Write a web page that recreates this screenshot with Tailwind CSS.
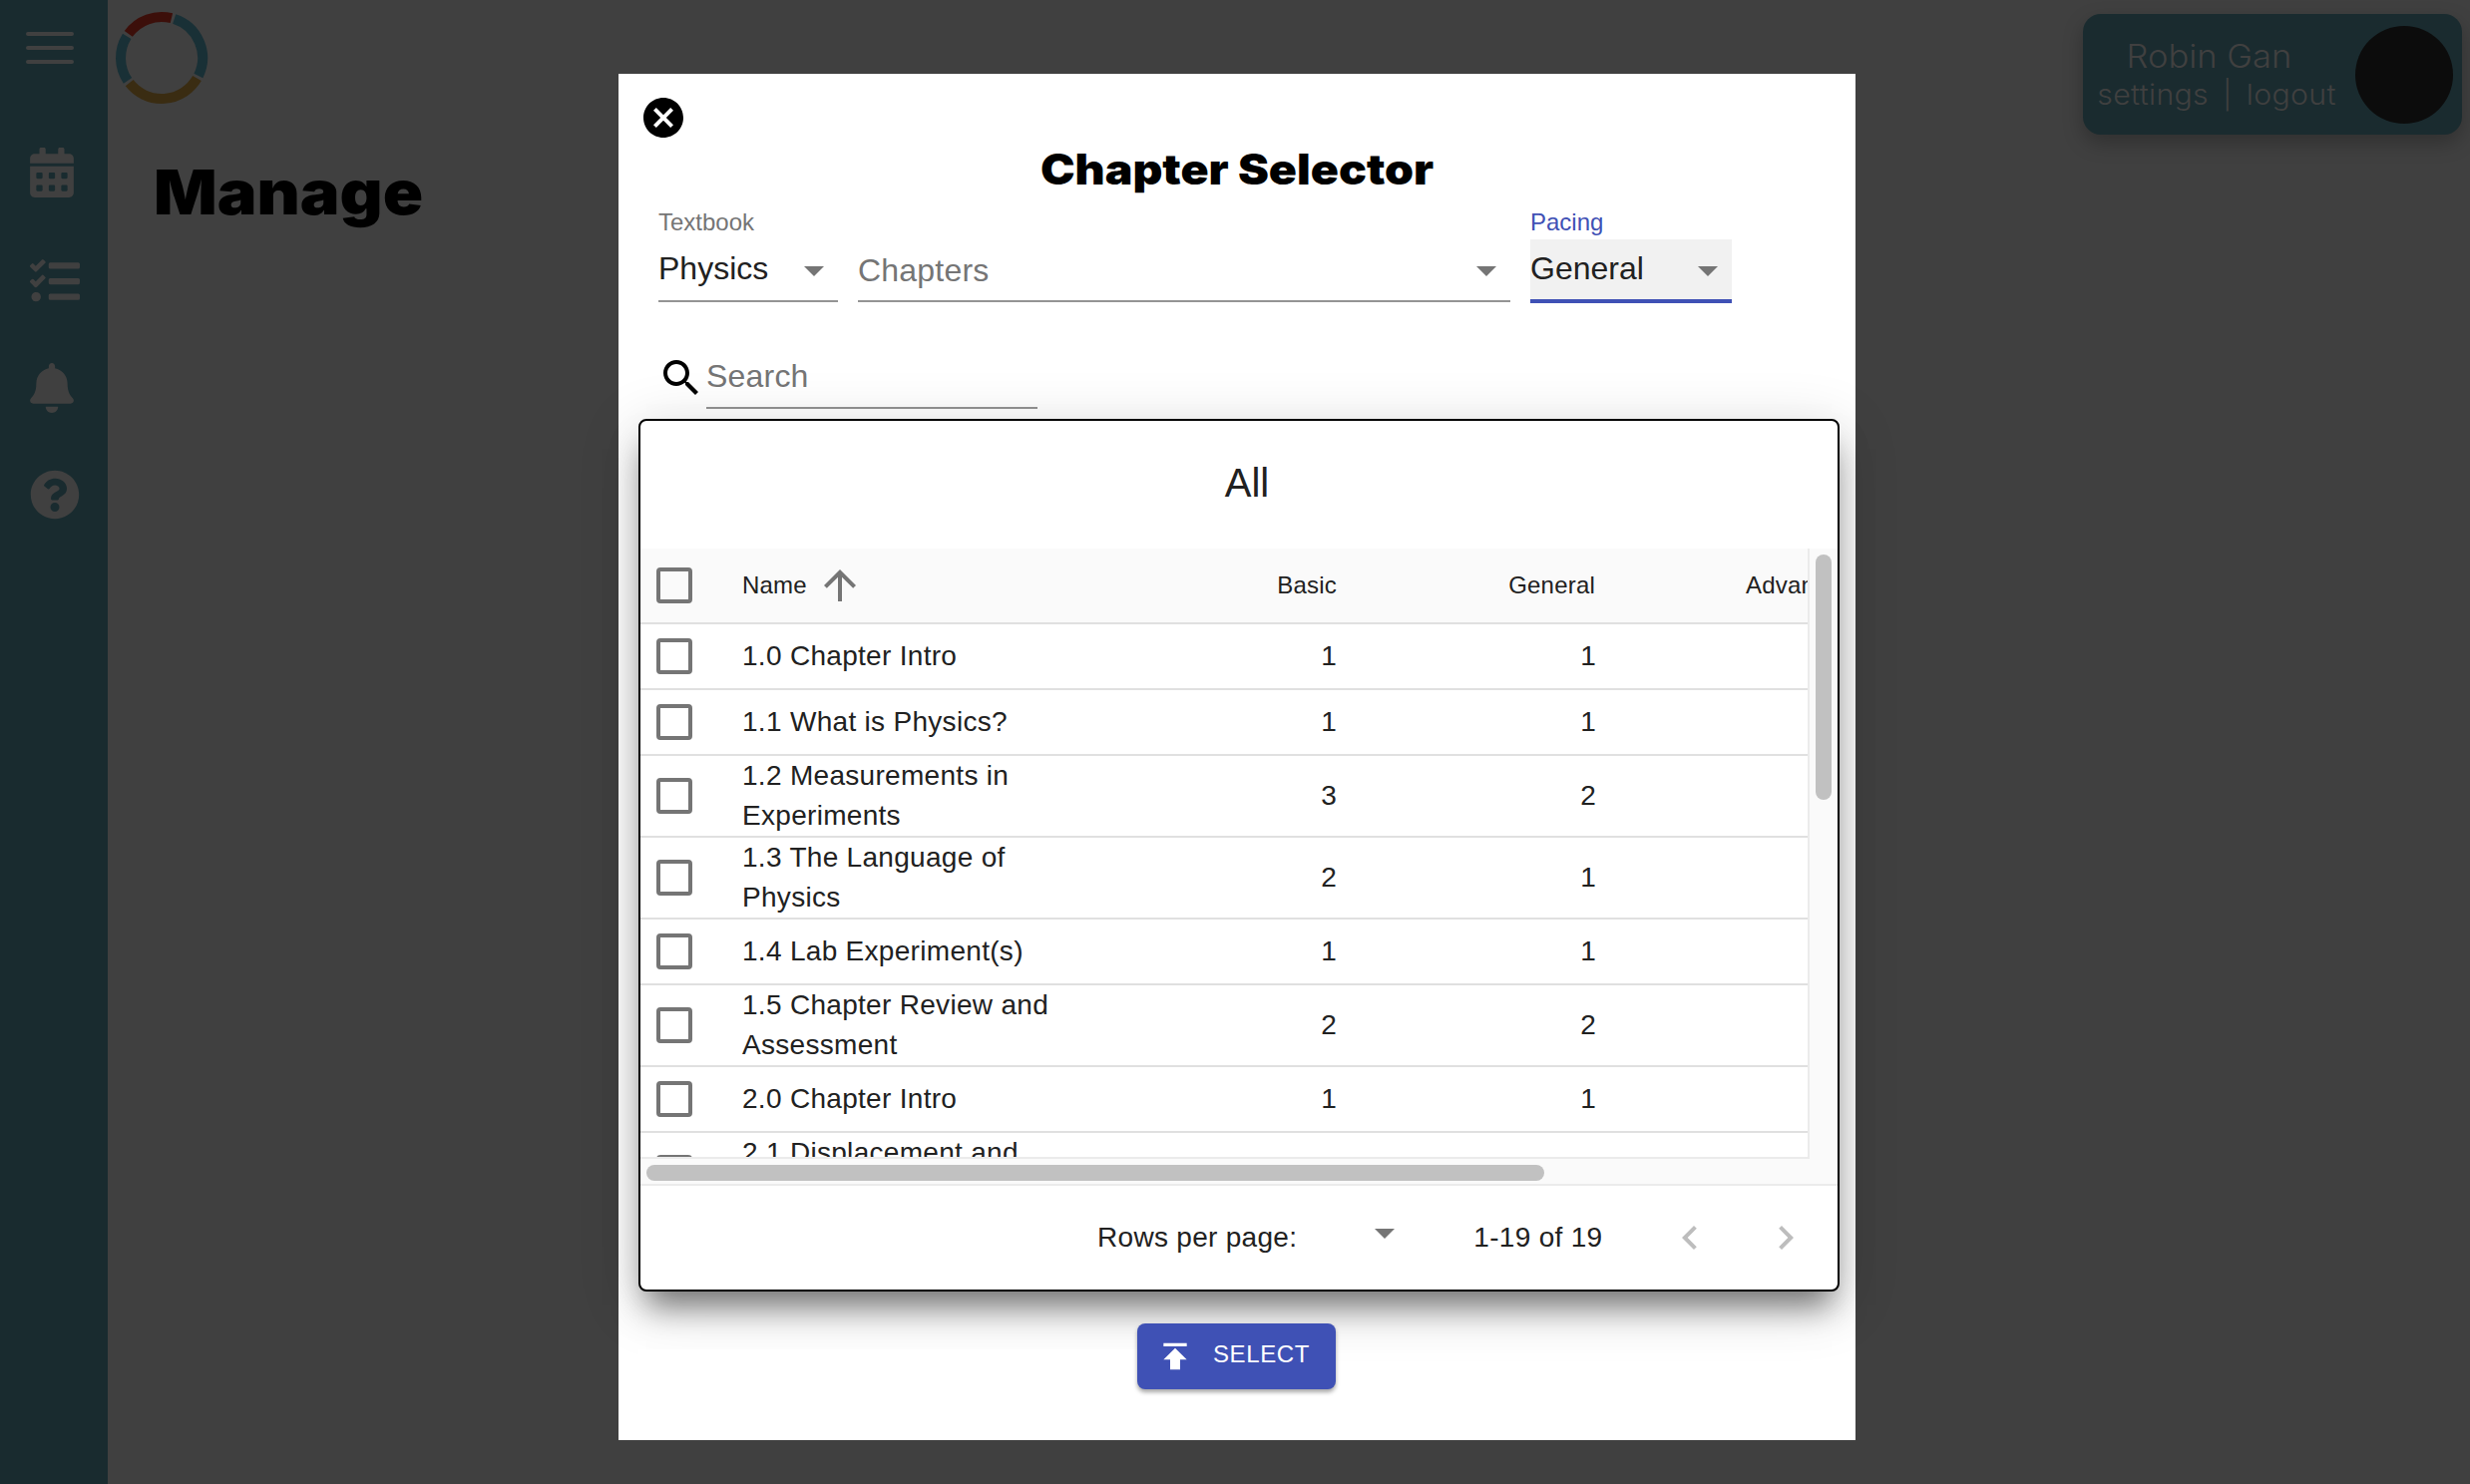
<!DOCTYPE html>
<html>
<head>
<meta charset="utf-8">
<script src="https://cdn.jsdelivr.net/npm/@tailwindcss/browser@4"></script>
<title>Manage</title>
</head>
<body class="font-['Liberation_Sans',Arial,sans-serif]">
<div class="relative flex h-[1488px] w-[2476px] overflow-hidden bg-[#404040]">
  <!-- Sidebar -->
  <aside class="flex h-full w-[108px] shrink-0 flex-col bg-[#192b2f] pl-[26px] text-[#404040]">
    <div class="mt-[32px] flex w-[48px] flex-col gap-[10px]">
      <div class="h-[4px] rounded-full bg-[#404040]"></div>
      <div class="h-[4px] rounded-full bg-[#404040]"></div>
      <div class="h-[4px] rounded-full bg-[#404040]"></div>
    </div>
    <svg class="ml-[4px] mt-[84px] h-[50px] w-[44px] shrink-0" viewBox="0 0 448 512" fill="currentColor"><path d="M0 464c0 26.5 21.5 48 48 48h352c26.5 0 48-21.5 48-48V192H0v272zm320-196c0-6.6 5.4-12 12-12h40c6.6 0 12 5.4 12 12v40c0 6.6-5.4 12-12 12h-40c-6.6 0-12-5.4-12-12v-40zm0 128c0-6.6 5.4-12 12-12h40c6.6 0 12 5.4 12 12v40c0 6.6-5.4 12-12 12h-40c-6.6 0-12-5.4-12-12v-40zM192 268c0-6.6 5.4-12 12-12h40c6.6 0 12 5.4 12 12v40c0 6.6-5.4 12-12 12h-40c-6.6 0-12-5.4-12-12v-40zm0 128c0-6.6 5.4-12 12-12h40c6.6 0 12 5.4 12 12v40c0 6.6-5.4 12-12 12h-40c-6.6 0-12-5.4-12-12v-40zM64 268c0-6.6 5.4-12 12-12h40c6.6 0 12 5.4 12 12v40c0 6.6-5.4 12-12 12H76c-6.6 0-12-5.4-12-12v-40zm0 128c0-6.6 5.4-12 12-12h40c6.6 0 12 5.4 12 12v40c0 6.6-5.4 12-12 12H76c-6.6 0-12-5.4-12-12v-40zM400 64h-48V16c0-8.8-7.2-16-16-16h-32c-8.8 0-16 7.2-16 16v48H160V16c0-8.8-7.2-16-16-16h-32c-8.8 0-16 7.2-16 16v48H48C21.5 64 0 85.5 0 112v48h448v-48c0-26.5-21.5-48-48-48z"/></svg>
    <svg class="ml-[4px] mt-[59px] h-[50px] w-[50px] shrink-0" viewBox="0 0 512 512" fill="currentColor"><path d="M139.61 35.5a12 12 0 0 0-17 0L58.93 98.81l-22.7-22.12a12 12 0 0 0-17 0L3.53 92.41a12 12 0 0 0 0 17l47.59 47.4a12.78 12.78 0 0 0 17.61 0l15.59-15.62L156.52 69a12.09 12.09 0 0 0 .09-17zm0 159.19a12 12 0 0 0-17 0l-63.68 63.72-22.7-22.1a12 12 0 0 0-17 0L3.53 252a12 12 0 0 0 0 17L51 316.5a12.77 12.77 0 0 0 17.6 0l15.7-15.69 72.2-72.22a12 12 0 0 0 .09-16.9zM64 368c-26.49 0-48.59 21.5-48.59 48S37.53 464 64 464a48 48 0 0 0 0-96zm432 16H208a16 16 0 0 0-16 16v32a16 16 0 0 0 16 16h288a16 16 0 0 0 16-16v-32a16 16 0 0 0-16-16zm0-320H208a16 16 0 0 0-16 16v32a16 16 0 0 0 16 16h288a16 16 0 0 0 16-16V80a16 16 0 0 0-16-16zm0 160H208a16 16 0 0 0-16 16v32a16 16 0 0 0 16 16h288a16 16 0 0 0 16-16v-32a16 16 0 0 0-16-16z"/></svg>
    <svg class="ml-[4px] mt-[57px] h-[50px] w-[44px] shrink-0" viewBox="0 0 448 512" fill="currentColor"><path d="M224 512c35.32 0 63.97-28.65 63.97-64H160.03c0 35.35 28.65 64 63.97 64zm215.39-149.71c-19.32-20.76-55.47-51.99-55.47-154.29 0-77.7-54.48-139.9-127.94-155.16V32c0-17.67-14.32-32-31.98-32s-31.98 14.33-31.98 32v20.84C118.56 68.1 64.08 130.3 64.08 208c0 102.3-36.15 133.53-55.47 154.29-6 6.45-8.66 14.16-8.61 21.71.11 16.4 12.98 32 32.1 32h383.8c19.12 0 32-15.6 32.1-32 .05-7.55-2.61-15.27-8.61-21.71z"/></svg>
    <svg class="ml-[4px] mt-[57px] h-[50px] w-[50px] shrink-0" viewBox="0 0 512 512" fill="currentColor"><path d="M504 256c0 136.997-111.043 248-248 248S8 392.997 8 256C8 119.083 119.043 8 256 8s248 111.083 248 248zM262.655 90c-54.497 0-89.255 22.957-116.549 63.758-3.536 5.286-2.353 12.415 2.715 16.258l34.699 26.31c5.205 3.947 12.621 3.008 16.665-2.122 17.864-22.658 30.113-35.797 57.303-35.797 20.429 0 45.698 13.148 45.698 32.958 0 14.976-12.363 22.667-32.534 33.976C247.128 238.528 216 254.941 216 296v4c0 6.627 5.373 12 12 12h56c6.627 0 12-5.373 12-12v-1.333c0-28.462 83.186-29.647 83.186-106.667 0-58.002-60.165-102-116.531-102zM256 338c-25.365 0-46 20.635-46 46 0 25.364 20.635 46 46 46s46-20.636 46-46c0-25.365-20.635-46-46-46z"/></svg>
  </aside>

  <!-- Main -->
  <main class="flex-1">
    <div class="flex items-start">
      <svg class="ml-[4px] mt-[8px] h-[100px] w-[100px]" viewBox="112 6 100 100" fill="none" stroke-width="10">
        <path d="M128.8 31.9A41 41 0 0 1 171.9 16.2" stroke="#3c0f0a"/>
        <path d="M174.7 17A41 41 0 0 1 198.9 74" stroke="#193036"/>
        <path d="M197.5 76.5A41 41 0 0 1 129.7 81.2" stroke="#3a2c12"/>
        <path d="M128 78.9A41 41 0 0 1 127.2 34.3" stroke="#193036"/>
      </svg>
      <div class="ml-auto mr-[8px] mt-[14px] flex h-[121px] w-[380px] items-center rounded-[18px] bg-[#1a2b2f] shadow-[0_8px_20px_rgba(0,0,0,0.25)]">
        <div class="ml-[15px] flex w-[238px] scale-x-[1.08] flex-col items-center font-['Inter',sans-serif] font-light text-[#404040]">
          <div class="pr-[14px] text-[32px] leading-[40px]">Robin Gan</div>
          <div class="flex text-[28px] leading-[36px] tracking-[0.3px]"><span>settings</span><span class="mx-[13px]">|</span><span>logout</span></div>
        </div>
        <div class="ml-auto mr-[9px] h-[98px] w-[98px] rounded-full bg-[#0c0c0c]"></div>
      </div>
    </div>
    <h1 class="ml-[46px] mt-[22px] origin-left scale-x-[1.075] font-['Inter',sans-serif] text-[62px] font-black leading-[72px] text-black">Manage</h1>
  </main>

  <!-- Dialog -->
  <section class="absolute left-[620px] top-[74px] flex h-[1370px] w-[1240px] flex-col bg-white px-[20px]">
    <svg class="ml-[1px] mt-[20px] h-[48px] w-[48px] shrink-0" viewBox="0 0 24 24" fill="#000"><path d="M12 2C6.47 2 2 6.47 2 12s4.47 10 10 10 10-4.47 10-10S17.53 2 12 2zm5 13.59L15.59 17 12 13.41 8.41 17 7 15.59 10.59 12 7 8.41 8.41 7 12 10.59 15.59 7 17 8.41 13.41 12 17 15.59z"/></svg>
    <h2 class="mt-[3px] scale-x-[1.105] text-center font-['Inter',sans-serif] text-[42px] font-black leading-[50px] text-black">Chapter Selector</h2>

    <div class="mt-[14px] flex gap-[20px] pl-[20px]">
      <div class="w-[180px]">
        <div class="h-[31px] text-[24px] leading-[28px] text-[#757575]">Textbook</div>
        <div class="flex h-[63px] items-center justify-between border-b-2 border-[#949494] pr-[14px] text-[32px] text-[#212121]">
          <span class="-mt-[4px]">Physics</span>
          <span class="mt-[2px] h-0 w-0 border-x-[10px] border-t-[10px] border-x-transparent border-t-[#757575]"></span>
        </div>
      </div>
      <div class="w-[654px]">
        <div class="h-[31px]"></div>
        <div class="flex h-[63px] items-center justify-between border-b-2 border-[#949494] pr-[14px] text-[32px] tracking-[0.2px] text-[#757575]">
          <span>Chapters</span>
          <span class="mt-[2px] h-0 w-0 border-x-[10px] border-t-[10px] border-x-transparent border-t-[#757575]"></span>
        </div>
      </div>
      <div class="w-[202px]">
        <div class="h-[31px] text-[24px] leading-[28px] text-[#3f51b5]">Pacing</div>
        <div class="flex h-[64px] items-center justify-between border-b-4 border-[#3f51b5] bg-[#f1f1f1] pr-[14px] text-[32px] text-[#212121]">
          <span class="-mt-[2px]">General</span>
          <span class="mt-[3px] h-0 w-0 border-x-[10px] border-t-[10px] border-x-transparent border-t-[#757575]"></span>
        </div>
      </div>
    </div>

    <div class="mt-[51px] flex h-[65px] shrink-0 items-start pl-[25px]">
      <svg class="h-[48px] w-[48px] shrink-0 -ml-[6px] -mr-[4px]" viewBox="0 0 24 24" fill="#000"><path d="M15.5 14h-.79l-.28-.27C15.41 12.59 16 11.11 16 9.5 16 5.91 13.09 3 9.5 3S3 5.91 3 9.5 5.91 16 9.5 16c1.61 0 3.09-.59 4.23-1.57l.27.28v.79l5 4.99L20.49 19l-4.99-5zm-6 0C7.01 14 5 11.99 5 9.5S7.01 5 9.5 5 14 7.01 14 9.5 11.99 14 9.5 14z"/></svg>
      <div class="ml-[5px] h-[55px] w-[332px] border-b-2 border-[#949494] pt-[1px] text-[32px] leading-[42px] tracking-[0.2px] text-[#757575]">Search</div>
    </div>

    <!-- Table card -->
    <div class="relative z-10 flex h-[875px] w-[1204px] shrink-0 flex-col rounded-[8px] border-2 border-black bg-white shadow-[0_22px_30px_-8px_rgba(0,0,0,0.5),0_12px_60px_4px_rgba(0,0,0,0.14)]">
      <div class="flex h-[128px] shrink-0 items-center justify-center pb-[4px] pl-[16px] text-[40px] text-[#212121]">All</div>
      <div class="flex h-[612px] shrink-0">
        <div class="h-full w-[1172px] overflow-hidden border-r-2 border-b-2 border-[#ebebeb] text-[28px] leading-[40px] tracking-[0.3px] text-[#212121]">
          <div class="grid h-[76px] grid-cols-[102px_336px_260px_260px_500px] items-center border-b-2 border-[#e0e0e0] bg-[#fafafa] text-[24px] tracking-[0.2px]">
            <div class="pl-[16px]"><div class="h-[36px] w-[36px] rounded-[4px] border-[4px] border-[#757575]"></div></div>
            <div class="flex items-center">Name<svg class="ml-[9px] h-[48px] w-[48px]" viewBox="0 0 24 24" fill="#757575"><path d="M4 12l1.41 1.41L11 7.83V20h2V7.83l5.58 5.59L20 12l-8-8-8 8z"/></svg></div>
            <div class="text-right">Basic</div>
            <div class="pr-[1px] text-right">General</div>
            <div class="whitespace-nowrap pl-[150px]">Advanced</div>
          </div>
          <div class="grid h-[66px] grid-cols-[102px_336px_260px_260px_500px] items-center border-b-2 border-[#e0e0e0]">
            <div class="pl-[16px]"><div class="h-[36px] w-[36px] rounded-[4px] border-[4px] border-[#757575]"></div></div>
            <div>1.0 Chapter Intro</div><div class="text-right">1</div><div class="text-right">1</div><div></div>
          </div>
          <div class="grid h-[66px] grid-cols-[102px_336px_260px_260px_500px] items-center border-b-2 border-[#e0e0e0]">
            <div class="pl-[16px]"><div class="h-[36px] w-[36px] rounded-[4px] border-[4px] border-[#757575]"></div></div>
            <div>1.1 What is Physics?</div><div class="text-right">1</div><div class="text-right">1</div><div></div>
          </div>
          <div class="grid h-[82px] grid-cols-[102px_336px_260px_260px_500px] items-center border-b-2 border-[#e0e0e0]">
            <div class="pl-[16px]"><div class="h-[36px] w-[36px] rounded-[4px] border-[4px] border-[#757575]"></div></div>
            <div>1.2 Measurements in Experiments</div><div class="text-right">3</div><div class="text-right">2</div><div></div>
          </div>
          <div class="grid h-[82px] grid-cols-[102px_336px_260px_260px_500px] items-center border-b-2 border-[#e0e0e0]">
            <div class="pl-[16px]"><div class="h-[36px] w-[36px] rounded-[4px] border-[4px] border-[#757575]"></div></div>
            <div>1.3 The Language of Physics</div><div class="text-right">2</div><div class="text-right">1</div><div></div>
          </div>
          <div class="grid h-[66px] grid-cols-[102px_336px_260px_260px_500px] items-center border-b-2 border-[#e0e0e0]">
            <div class="pl-[16px]"><div class="h-[36px] w-[36px] rounded-[4px] border-[4px] border-[#757575]"></div></div>
            <div>1.4 Lab Experiment(s)</div><div class="text-right">1</div><div class="text-right">1</div><div></div>
          </div>
          <div class="grid h-[82px] grid-cols-[102px_336px_260px_260px_500px] items-center border-b-2 border-[#e0e0e0]">
            <div class="pl-[16px]"><div class="h-[36px] w-[36px] rounded-[4px] border-[4px] border-[#757575]"></div></div>
            <div>1.5 Chapter Review and Assessment</div><div class="text-right">2</div><div class="text-right">2</div><div></div>
          </div>
          <div class="grid h-[66px] grid-cols-[102px_336px_260px_260px_500px] items-center border-b-2 border-[#e0e0e0]">
            <div class="pl-[16px]"><div class="h-[36px] w-[36px] rounded-[4px] border-[4px] border-[#757575]"></div></div>
            <div>2.0 Chapter Intro</div><div class="text-right">1</div><div class="text-right">1</div><div></div>
          </div>
          <div class="grid h-[82px] grid-cols-[102px_336px_260px_260px_500px] items-center border-b-2 border-[#e0e0e0]">
            <div class="pl-[16px]"><div class="h-[36px] w-[36px] rounded-[4px] border-[4px] border-[#757575]"></div></div>
            <div>2.1 Displacement and Velocity</div><div class="text-right">2</div><div class="text-right">2</div><div></div>
          </div>
        </div>
        <div class="flex-1 bg-[#fafafa] pl-[6px] pt-[6px]">
          <div class="h-[246px] w-[16px] rounded-full bg-[#c1c1c1]"></div>
        </div>
      </div>
      <div class="h-[27px] shrink-0 border-b-2 border-[#ebebeb] bg-[#fafafa] pl-[6px] pt-[6px]">
        <div class="h-[16px] w-[900px] rounded-full bg-[#c1c1c1]"></div>
      </div>
      <div class="flex flex-1 items-center text-[28px] tracking-[0.3px] text-[#212121]">
        <span class="ml-[458px]">Rows per page:</span>
        <span class="ml-[78px] -mt-[8px] h-0 w-0 border-x-[10px] border-t-[10px] border-x-transparent border-t-[#757575]"></span>
        <span class="ml-[79px]">1-19 of 19</span>
        <svg class="ml-[64px] h-[48px] w-[48px]" viewBox="0 0 24 24" fill="#bdbdbd"><path d="M15.41 7.41L14 6l-6 6 6 6 1.41-1.41L10.83 12z"/></svg>
        <svg class="ml-[48px] h-[48px] w-[48px]" viewBox="0 0 24 24" fill="#bdbdbd"><path d="M10 6L8.59 7.41 13.17 12l-4.58 4.59L10 18l6-6z"/></svg>
      </div>
    </div>

    <!-- Footer -->
    <div class="relative z-20 mt-[32px] flex h-[66px] shrink-0 items-start">
      <div class="mt-[26px] h-[90px] w-[500px] bg-white"></div>
      <button class="flex h-[66px] w-[199px] items-center rounded-[8px] bg-[#3f51b5] pl-[18px] text-[24px] tracking-[0.6px] text-white shadow-[0_3px_4px_rgba(0,0,0,0.35)]">
        <svg class="h-[40px] w-[40px] shrink-0" viewBox="0 0 24 24" fill="#fff"><path d="M5 4v2h14V4H5zm0 10h4v6h6v-6h4l-7-7-7 7z"/></svg>
        <span class="ml-[18px] -mt-[5px]">SELECT</span>
      </button>
    </div>
  </section>
</div>
</body>
</html>
